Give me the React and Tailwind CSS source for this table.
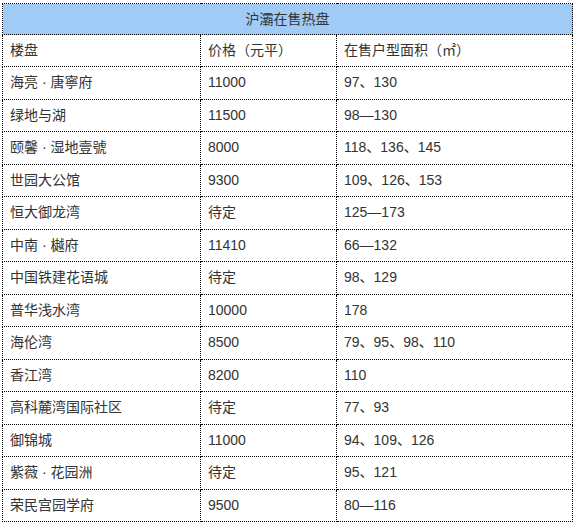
import React from 'react';

const rows = [
  ['海亮 · 唐寧府', '11000', '97、130'],
  ['绿地与湖', '11500', '98—130'],
  ['颐馨 · 湿地壹號', '8000', '118、136、145'],
  ['世园大公馆', '9300', '109、126、153'],
  ['恒大御龙湾', '待定', '125—173'],
  ['中南 · 樾府', '11410', '66—132'],
  ['中国铁建花语城', '待定', '98、129'],
  ['普华浅水湾', '10000', '178'],
  ['海伦湾', '8500', '79、95、98、110'],
  ['香江湾', '8200', '110'],
  ['高科麓湾国际社区', '待定', '77、93'],
  ['御锦城', '11000', '94、109、126'],
  ['紫薇 · 花园洲', '待定', '95、121'],
  ['荣民宫园学府', '9500', '80—116'],
];

const cell = 'border border-dotted border-black px-[7px] text-left align-middle';

const App = () => {
  return (
    <div
      className="w-[576px] h-[525px] bg-white pl-[2px] pt-[3px] text-[#333] text-[14px]"
      style={{ fontFamily: '"Liberation Sans", "Noto Sans CJK SC", sans-serif' }}
    >
      <table className="border-collapse table-fixed w-[570px]">
        <colgroup>
          <col className="w-[198px]" />
          <col className="w-[136px]" />
          <col className="w-[236px]" />
        </colgroup>
        <tbody>
          <tr className="h-[31px]">
            <td colSpan={3} className="border border-dotted border-black bg-[#9fcbf6] text-center align-middle">
              沪灞在售热盘
            </td>
          </tr>
          <tr className="h-[32px]">
            <td className={cell}>楼盘</td>
            <td className={cell}>价格（元平）</td>
            <td className={cell}>在售户型面积（㎡）</td>
          </tr>
          {rows.map(([name, price, area]) => (
            <tr key={name} className="h-[32.5px]">
              <td className={cell}>{name}</td>
              <td className={cell}>{price}</td>
              <td className={cell}>{area}</td>
            </tr>
          ))}
        </tbody>
      </table>
    </div>
  );
};

export default App;
